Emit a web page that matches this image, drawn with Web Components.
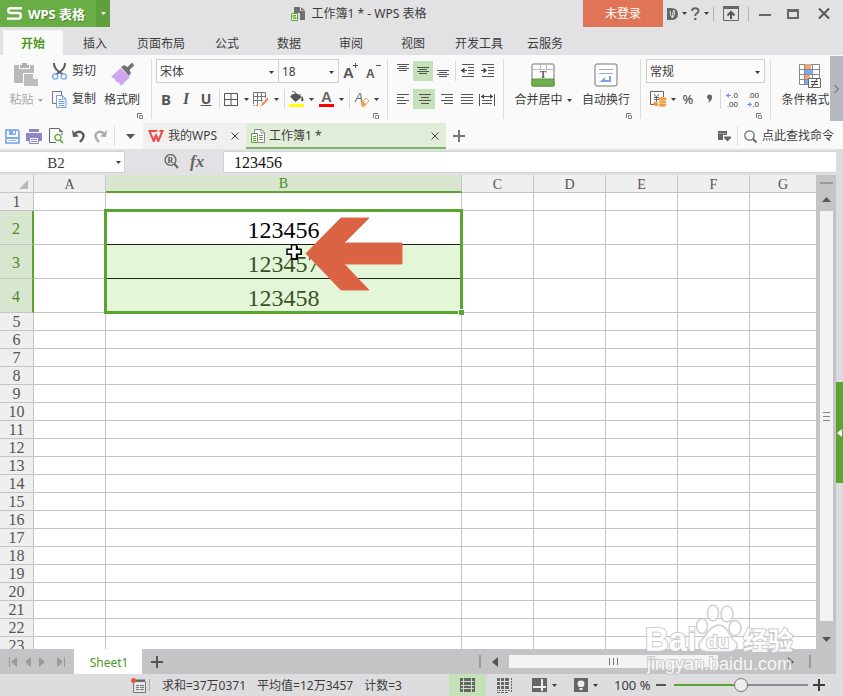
<!DOCTYPE html>
<html lang="zh-CN">
<head>
<meta charset="utf-8">
<title>工作簿1 * - WPS 表格</title>
<style>
  html, body { margin: 0; height: 100%; }
  body { font: 12px/16px "Noto Sans", "Noto Sans CJK SC", sans-serif; color: #3c3c3c; background: #e2e2e4; overflow: hidden; }
</style>
</head>
<body>
<wps-app></wps-app>
<script>
const RESET = `*{box-sizing:border-box} button,select,input{font:inherit;color:inherit;margin:0;padding:0;border:0;background:none;border-radius:0;outline:0} button{display:flex;align-items:center;justify-content:center;white-space:nowrap}`;
function define(tag, css, html, init) {
  const t = document.createElement('template');
  t.innerHTML = `<style>${RESET}${css}</style>${html}`;
  customElements.define(tag, class extends HTMLElement {
    constructor() {
      super();
      this.attachShadow({ mode: 'open' }).appendChild(t.content.cloneNode(true));
    }
    connectedCallback() { if (init) init.call(this, this.shadowRoot); }
  });
}

/* Icon set: [width, height, markup] */
const bars = (rows) => rows.map(([x, y, w]) => `<path d="M${x} ${y + .5}h${w}" stroke="#555" fill="none"/>`).join('');
const ICONS = {
  caret: [5, 3, `<path d="M0 0h5L2.500 3z" fill="currentColor"/>`],
  caretBig: [9, 5, `<path d="M0 0h9L4.500 5z" fill="#555"/>`],
  logo: [15, 13, `<path d="M15 1.200H3.500Q1.200 1.200 1.200 3.400T3.500 6H11.500Q13.800 6 13.800 8.700T11.500 11.600H0" fill="none" stroke="#fff" stroke-width="2.400"/>`],
  book: [14, 14, `<path d="M3 0h6v4h5v9H9V6H3z" fill="#707070"/><path d="M10 0l4 3.500h-4z" fill="#777"/><path d="M.5 6.500h6v7h-6z" fill="#fff" stroke="#58a82e"/><path d="M5 8.500H2v1.500h3v1.500H2" fill="none" stroke="#58a82e"/>`],
  docer: [11, 12, `<path d="M0 0h4q7 0 7 6t-7 6H0z" fill="#666"/><path d="M3 3q0 4 2.500 7Q9 7 7 2 5.500 4 5.500 9" fill="none" stroke="#e2e2e4"/>`],
  help: [9, 13, `<path d="M1 4Q1 1.200 4.200 1.200T7.500 4Q7.500 5.500 5.800 6.300T4.200 9" fill="none" stroke="#666" stroke-width="2"/><path d="M3 11h2.400v2H3z" fill="#666"/>`],
  fold: [16, 15, `<path d="M.5.5h15v14H.5z" fill="none" stroke="#666"/><path d="M0 0h16v3H0z" fill="#666"/><path d="M8 13V6M4.500 9.500L8 6l3.500 3.500" fill="none" stroke="#555" stroke-width="2"/>`],
  min: [12, 9, `<path d="M0 5h12v2H0z" fill="#666"/>`],
  max: [12, 10, `<path d="M1 2h10v7H1z" fill="none" stroke="#666" stroke-width="2"/><path d="M0 0h12v3H0z" fill="#666"/>`],
  close: [12, 11, `<path d="M1 .5l10 10M11 .5l-10 10" stroke="#555" stroke-width="2"/>`],
  launch: [6, 6, `<path d="M.5 5V.5H5" fill="none" stroke="#777"/><path d="M2.500 2.500h3v3h-3z" fill="none" stroke="#888"/>`],
  paste: [25, 24, `<path d="M0 3q0-1 1-1h4v4h11V2h3q1 0 1 1v7H9v10H1q-1 0-1-1z" fill="#b9b9b9"/><path d="M6 5V2h2V0h5v2h2v3z" fill="#b0b0b0"/><path d="M10 11h9l5 5v7H10z" fill="#bdbdbd"/><path d="M19 11v5h5z" fill="#f5f5f5"/>`],
  cut: [15, 17, `<path d="M2 0q0 5 4 8l5 3.500M13 0q0 5-4 8l-5 3.500" fill="none" stroke="#5c5c5c" stroke-width="2"/><circle cx="3.200" cy="13.500" r="2.600" fill="none" stroke="#7fa6e8" stroke-width="1.400"/><circle cx="11.800" cy="13.500" r="2.600" fill="none" stroke="#7fa6e8" stroke-width="1.400"/>`],
  copy: [15, 17, `<path d="M4 12.500H.5V.5h9V4" fill="none" stroke="#777"/><path d="M4.500 4.500h6l3.500 3.500v8.500H4.500z" fill="#fff" stroke="#6f9cec"/><path d="M10.500 4.500V8H14M6.500 8.500h3M6.500 10.500h6M6.500 12.500h6M6.500 14.500h6" fill="none" stroke="#6f9cec"/>`],
  painter: [23, 24, `<path d="M9.500 5l-9.500 9 3.500 1.500L5 19l3 .5 2 3.500 9-9z" fill="#cfa6f2"/><path d="M10 4l3-2 3.500 2L20 .5q1-1 2 0t.8 2.300L18.500 7l1.500 3-2 3z" fill="#737373"/>`],
  grid: [14, 13, `<path d="M.5.5h13v12H.5zM7 .5v12M.5 6.500h13" fill="none" stroke="#555"/>`],
  gridPen: [16, 15, `<path d="M.5 12V.5h12V6M4.500.5v13M8.500.5v9M.5 4.500h12M.5 8.500h9" fill="none" stroke="#777"/><path d="M0 13.500h5" stroke="#ef8a55" stroke-dasharray="2 1"/><path d="M14.500 5.500l-5.500 6-1.500 3 3-1.500 5-5.500z" fill="#ef8a55"/>`],
  fill: [15, 16, `<path d="M5 1l8 5-6.500 5L1 5.500 6.500 2z" fill="#555"/><path d="M3 1q3-2 5 4M2 4h10" fill="none" stroke="#555"/><path d="M13 5q2.500 4 1 5t-2-1z" fill="#555"/><path d="M0 13h15v3H0z" fill="#ff0"/>`],
  fontColor: [15, 16, `<text x="7.500" y="11" text-anchor="middle" font-family="Liberation Sans" font-weight="bold" font-size="15" fill="#666">A</text><path d="M0 13h15v3H0z" fill="#f00"/>`],
  eraser: [15, 15, `<text x="0" y="10" font-family="Liberation Sans" font-size="12" font-style="italic" fill="#666">A</text><path d="M6 11l5-5 3 3-5 5.500H7.500z" fill="#fff" stroke="#f0a050"/><path d="M6 11l2-2 3.500 3.500-2.500 2H7.500z" fill="#f0a050"/>`],
  bigger: [16, 16, `<text x="0" y="15" font-family="Liberation Sans" font-weight="bold" font-size="15" fill="#555">A</text><path d="M10 2.500h5M12.500 0v5" stroke="#555"/>`],
  smaller: [15, 16, `<text x="0" y="15" font-family="Liberation Sans" font-weight="bold" font-size="12" fill="#555">A</text><path d="M10 2.500h5" stroke="#555"/>`],
  vtop: [14, 16, bars([[1,1,12],[3,3,8],[1,5,12],[3,7,8]])],
  vmid: [14, 16, bars([[1,4,12],[3,6,8],[1,8,12],[3,10,8]])],
  vbot: [14, 16, bars([[1,7,12],[3,9,8],[1,11,12],[3,13,8]])],
  outdent: [14, 14, bars([[1,0,12],[7,3,6],[7,6,6],[7,9,6],[1,12,12]]) + `<path d="M0 6.500h6" stroke="#444"/><path d="M3.500 3.500v6L0 6.500z" fill="#444"/>`],
  indent: [14, 14, bars([[1,0,12],[7,3,6],[7,6,6],[7,9,6],[1,12,12]]) + `<path d="M0 6.500h5" stroke="#444"/><path d="M2.500 3.500v6L6 6.500z" fill="#444"/>`],
  left: [13, 12, bars([[0,1,12],[0,4,7],[0,7,12],[0,10,9]])],
  center: [13, 12, bars([[1,1,12],[3,4,8],[1,7,12],[3,10,8]])],
  right: [13, 12, bars([[1,1,12],[5,4,8],[1,7,12],[4,10,9]])],
  justify: [13, 12, bars([[0,1,12],[0,4,12],[0,7,12],[0,10,12]])],
  distrib: [16, 13, bars([[3,7,10],[3,10,10]]) + `<path d="M.5 1v12M15.500 1v12M2 3.500h12" stroke="#555"/><path d="M2 3.500L5 1v5zM14 3.500L11 1v5z" fill="#444"/>`],
  merge: [24, 24, `<rect x="1" y="1" width="22" height="22" rx="1" fill="#fff" stroke="#747474"/><path d="M9.500 1v5M15.500 1v5M1 6.500h22" stroke="#bbb"/><path d="M1 16h22v7H1z" fill="#6fae50" stroke="#579a38"/><text x="12" y="15" text-anchor="middle" font-family="Liberation Serif" font-weight="bold" font-size="10" fill="#555">T</text>`],
  wrap: [24, 24, `<rect x="1" y="1" width="22" height="22" rx="2" fill="#fff" stroke="#747474"/><path d="M5 6.500h14M5 10.500h14" stroke="#aaa"/><path d="M16 13v5H9" fill="none" stroke="#7aa5ee" stroke-width="2"/><path d="M11 14v5H5.500z" fill="#7aa5ee"/>`],
  currency: [17, 17, `<path d="M5 13.500H.5V.5h13V6" fill="none" stroke="#666"/><path d="M4 3l2.500 3L9 3M6.500 6v5M4 6.500h5M4 8.500h5" fill="none" stroke="#666"/><path d="M3 12q2-2 5 0v3H5z" fill="#f0993e"/><ellipse cx="12.500" cy="8" rx="4" ry="2" fill="#f0993e"/><ellipse cx="12.500" cy="11" rx="4" ry="2" fill="#f0993e" stroke="#fff" stroke-width=".5"/><ellipse cx="12.500" cy="14" rx="4" ry="2" fill="#f0993e" stroke="#fff" stroke-width=".5"/>`],
  comma: [7, 16, `<path d="M1 6q0-2.500 2.700-2.500T6 6.500Q6 10 2 11.500q1.500-2 1-3Q1 8 1 6z" fill="#666"/>`],
  decInc: [14, 16, `<path d="M0 4.500h5" stroke="#6f9cec"/><path d="M3 2v5L0 4.500z" fill="#6f9cec"/><text x="12" y="7" text-anchor="end" font-family="Liberation Sans" font-size="8" fill="#333">.0</text><text x="12" y="16" text-anchor="end" font-family="Liberation Sans" font-size="8" fill="#333">.00</text>`],
  decDec: [14, 16, `<path d="M0 13.500h5" stroke="#6f9cec"/><path d="M2 11v5l3-2.500z" fill="#6f9cec"/><text x="12" y="7" text-anchor="end" font-family="Liberation Sans" font-size="8" fill="#333">.00</text><text x="12" y="16" text-anchor="end" font-family="Liberation Sans" font-size="8" fill="#333">.0</text>`],
  cond: [24, 25, `<path d="M1.500 1.500h20v20h-20zM6.500 1v20M14.500 1v20M1 6.500h20M1 11.500h20M1 16.500h20" fill="#fff" stroke="#888"/><path d="M7 1h6v5H7zM7 12h5v4H7z" fill="#f5a56c"/><path d="M7 7h8v4H7zM7 17h3v4H7z" fill="#7ba8f2"/><path d="M10.500 15.500h12v9h-12z" fill="#fff" stroke="#666"/><path d="M13 18.500h7M13 21.500h7M19 16l-5 8" stroke="#444"/>`],
  chev: [5, 8, `<path d="M.5 0l4 4-4 4" fill="none" stroke="#555"/>`],
  save: [15, 15, `<path d="M1 1h11.500L14 2.500V14H1z" fill="#fff" stroke="#6f9fe8" stroke-width="1.600"/><path d="M4 1h7v5H4zM1 8h13v2H1z" fill="#7ba8ee"/><path d="M8 2h2v2.500H8z" fill="#fff"/><path d="M4 11.500h7" stroke="#8fb5f0"/>`],
  print: [16, 15, `<path d="M3 0h10v3H3zM0 4h16v8H0z" fill="#8b88c8"/><path d="M3.500 8.500h9v6h-9z" fill="#fff" stroke="#8b88c8"/><path d="M5 10.500h6M5 12.500h6" stroke="#8b88c8"/>`],
  preview: [15, 16, `<path d="M13 7V3.500L10 .5H.5v14H7" fill="none" stroke="#666"/><path d="M10 0v4h4z" fill="#777"/><circle cx="9" cy="9.500" r="3" fill="#fff" stroke="#6fae50" stroke-width="1.400"/><path d="M11 12l3 3" stroke="#6fae50" stroke-width="2"/>`],
  undo: [13, 13, `<path d="M2 4.500q4-4 7.500-2t1 6.500L8 12" fill="none" stroke="#5c5c5c" stroke-width="2.400"/><path d="M0 0l1 7 6-.5z" fill="#5c5c5c"/>`],
  redo: [13, 13, `<path d="M11 4.500q-4-4-7.500-2t-1 6.500L5 12" fill="none" stroke="#ababab" stroke-width="2.400"/><path d="M13 0l-1 7-6-.5z" fill="#ababab"/>`],
  wlogo: [16, 12, `<path d="M0 0h10l-1.500 2H3l2.500 6L8 3l2.500 5L13 2h-2l1-2h4l-5 12H9.500L8 8l-1.500 4H5z" fill="#ef4a4a"/>`],
  doc: [14, 14, `<path d="M3.500 5V.5h7l3 3v10h-7" fill="#fff" stroke="#8a8a8a"/><path d="M10 .5v3.500h3.500M8 6.500h4M8 8.500h4M8 10.500h4" fill="none" stroke="#8a8a8a"/><path d="M.5 4.500h6v9h-6zM2 7.500h3M2 9.500h3M2 11.500h3" fill="#fff" stroke="#5aa532"/>`],
  x: [8, 8, `<path d="M.5.5l7 7M7.500.5l-7 7" stroke="#444"/>`],
  plus: [12, 12, `<path d="M0 6h12M6 0v12" stroke="currentColor" stroke-width="2"/>`],
  minus: [10, 12, `<path d="M0 6h10" stroke="#555" stroke-width="2"/>`],
  windows: [13, 11, `<path d="M0 0h9v4H5v5H0z" fill="#666"/><path d="M1 2.500h7" stroke="#aaa"/><path d="M6 5.500h7v1.500L9.500 10.500 6 7z" fill="#666"/>`],
  search: [13, 13, `<circle cx="5.500" cy="5.500" r="4.700" fill="none" stroke="#666" stroke-width="1.200"/><path d="M9 9l3.500 3.500" stroke="#666" stroke-width="2"/>`],
  searchR: [15, 16, `<circle cx="6.500" cy="6" r="5.400" fill="none" stroke="#666" stroke-width="1.400"/><text x="6.500" y="9" text-anchor="middle" font-family="Liberation Serif" font-weight="bold" font-size="8" fill="#555">R</text><path d="M10.500 10l3.500 4" stroke="#666" stroke-width="2"/>`],
  up: [9, 5, `<path d="M0 5h9L4.500 0z" fill="#555"/>`],
  tri: [6, 10, `<path d="M6 0v10L0 5z" fill="currentColor"/>`],
  triR: [6, 10, `<path d="M0 0v10l6-5z" fill="currentColor"/>`],
  first: [8, 10, `<path d="M8 0v10L2 5z" fill="currentColor"/><path d="M.5 0v10" stroke="currentColor"/>`],
  last: [8, 10, `<path d="M0 0v10l6-5z" fill="currentColor"/><path d="M7.500 0v10" stroke="currentColor"/>`],
  macro: [15, 15, `<path d="M2.500 3.500h12v11h-12z" fill="#e6e6e6" stroke="#777"/><path d="M3 2.500h11" stroke="#666" stroke-width="2"/><path d="M5 7.500h3M9 7.500h4M5 9.500h3M9 9.500h4M5 11.500h3M9 11.500h4" stroke="#777"/><circle cx="2.500" cy="2.500" r="2.500" fill="#e8583a"/>`],
  vNormal: [15, 14, `<path d="M0 0h15v14H0z" fill="#666"/><path d="M1 3.500h13M1 7.500h13M1 10.500h13M3.500 0v14M11.500 0v14" stroke="#c5e1b9"/>`],
  vPage: [15, 15, `<path d="M0 0h12v11H0z" fill="#666"/><path d="M0 3.500h12M0 7.500h12M3.500 0v11M7.500 0v11" stroke="#ddd"/><path d="M14.500 0v15M13 12.500H0" stroke="#666" stroke-dasharray="2 1"/><path d="M0 14.500h12" stroke="#666" stroke-dasharray="3 1"/>`],
  vSplit: [15, 14, `<path d="M0 0h15v14H0z" fill="#666"/><path d="M10 1v12M1 9h13" stroke="#eee" stroke-width="2"/>`],
  bulb: [14, 14, `<path d="M0 0h14v14H0z" fill="#666"/><path d="M7 2.500q3.500 0 3.500 3.200Q10.500 7.500 9 9H5Q3.500 7.500 3.500 5.700 3.500 2.500 7 2.500zM5.500 10h3v2h-3z" fill="#eee"/>`],
  white: [5, 8, `<path d="M5 0v8L0 4z" fill="#fff"/>`],
};
define('wps-icon', ':host{display:block;flex:none} svg{display:block;overflow:visible}', '<div></div>', function (r) {
  const [w, h, s] = ICONS[this.getAttribute('name')];
  r.querySelector('div').innerHTML = `<svg width="${w}" height="${h}" viewBox="0 0 ${w} ${h}" aria-hidden="true">${s}</svg>`;
});

/* Small toolbar button: --w is the icon cell, --c the drop-down cell */
define('wps-tool', `:host{display:block;flex:none} button{height:20px} .m{width:var(--w,20px);display:flex;justify-content:center} .c{width:var(--c,0);display:flex;justify-content:center;overflow:hidden}
  :host([on]) button{background:#c5e1b9}`,
  '<button type="button"><span class="m"><slot></slot></span><span class="c"><wps-icon name="caret"></wps-icon></span></button>',
  function (r) {
    r.querySelector('button').setAttribute('aria-label', this.getAttribute('label') || '');
    if (!this.hasAttribute('caret')) { const c = r.querySelector('.c'); if (c) c.remove(); }
  });

/* Tall ribbon button: icon above caption */
define('wps-big', `:host{display:block;flex:none} button{flex-direction:column;justify-content:flex-start;width:100%;height:52px;padding-top:4px;gap:5px} .i{height:24px} .t{display:flex;align-items:center;gap:4px;height:16px}`,
  '<button type="button"><span class="i"><slot name="icon"></slot></span><span class="t"><slot></slot></span></button>');

define('wps-combo', `:host{display:flex;position:relative;height:24px;border:1px solid #cfcfd2;background:#fcfcfc;align-items:center} select{appearance:none;width:100%;height:100%;padding:2px 16px 0 3px} wps-icon{position:absolute;right:4px;top:11px;pointer-events:none}`,
  '<select></select><wps-icon name="caret"></wps-icon>', function (r) {
    const s = r.querySelector('select');
    s.setAttribute('aria-label', this.getAttribute('label'));
    s.innerHTML = `<option>${this.getAttribute('value')}</option>`;
  });

define('wps-group', `:host{display:block;flex:none;border-right:1px solid #dcdcde;height:60px} .b{height:52px;display:flex} .l{display:flex;justify-content:flex-end;padding:2px 8px 0 0} :host([plain]) .l{display:none}`,
  '<div class="b"><slot></slot></div><div class="l"><button type="button" aria-label="更多选项"><wps-icon name="launch"></wps-icon></button></div>');

define('wps-titlebar', `:host{display:grid;grid-template-columns:110px 1fr auto;height:27px;background:#e2e2e4}
  .l,.m,.r{display:flex;align-items:center} .r{justify-content:flex-end} .m{gap:7px;justify-content:center;padding-left:24px}
  .brand{width:96px;height:27px;background:#68ad45;color:#fff;font-weight:bold;font-size:13px;gap:6px;padding-right:4px;text-shadow:1px 1px #4d852f} .drop{width:14px;height:27px;background:#5fa03c;color:#fff}
  .login{width:80px;height:27px;background:#e07456;color:#fff;margin-right:4px} .c{gap:4px;width:24px} .s{width:1px;height:14px;background:#b4b4b6}
  .w{height:27px}`,
  `<div class="l"><button class="brand"><wps-icon name="logo"></wps-icon>WPS 表格</button><button class="drop" aria-label="菜单"><wps-icon name="caret"></wps-icon></button></div>
   <div class="m"><wps-icon name="book"></wps-icon><span>工作簿1 * - WPS 表格</span></div>
   <div class="r"><button class="login">未登录</button><button class="c" style="width:20px" aria-label="稻壳"><wps-icon name="docer"></wps-icon><wps-icon name="caret"></wps-icon></button><button class="c" style="width:26px" aria-label="帮助"><wps-icon name="help"></wps-icon><wps-icon name="caret"></wps-icon></button><span class="s"></span><button class="w" style="width:34px" aria-label="折叠功能区"><wps-icon name="fold"></wps-icon></button><span class="s"></span><button class="w" style="width:32px" aria-label="最小化"><wps-icon name="min"></wps-icon></button><button class="w" style="width:24px" aria-label="最大化"><wps-icon name="max"></wps-icon></button><button class="w" style="width:38px" aria-label="关闭"><wps-icon name="close"></wps-icon></button></div>`);

define('wps-menu', `:host{display:flex;height:28px;background:#e2e2e4;padding:3px 2px 0} button{min-width:62px;padding:2px 11px 0;height:25px} .on{background:#fafafa;border:1px solid #f4f4f4;border-bottom:0;color:#4b9a23;font-weight:bold;margin:0 1px;min-width:60px}`,
  ['开始','插入','页面布局','公式','数据','审阅','视图','开发工具','云服务'].map((t, i) => `<button type="button"${i ? '' : ' class="on"'}>${t}</button>`).join(''));

const tool = (label, icon, w, c) => `<wps-tool label="${label}" ${c ? 'caret' : ''} style="--w:${w}px;--c:${c || 0}px"><wps-icon name="${icon}"></wps-icon></wps-tool>`;
const sep = (w) => `<span class="sep" style="width:${w}px"></span>`;
define('wps-ribbon', `:host{display:flex;height:68px;padding:4px 0;background:#fafafa;overflow:hidden}
  .col{display:flex;flex-direction:column;gap:4px} .row{display:flex;align-items:center;height:24px}
  .sep{height:20px;display:flex;justify-content:center;flex:none} .sep::before{content:"";width:1px;background:#d8d8da}
  .txt{width:48px;height:24px;gap:4px;justify-content:flex-start} .txt wps-icon{width:16px}
  .b{font:bold 15px/20px "Noto Sans",sans-serif;color:#555} .i{font:italic bold 16px/20px "Liberation Serif",serif;color:#555} .u{font-size:14px;text-decoration:underline}
  .last{flex:1;min-width:0;overflow:hidden;padding-left:10px} .last wps-big{width:58px} .pct{font-size:13px}
  .more{flex:none;width:13px;height:65px;margin-top:-3px;background:#b6b9c2}`,
  `<wps-group><wps-big style="width:52px;color:#a8a8a8"><wps-icon slot="icon" name="paste"></wps-icon>粘贴<wps-icon name="caret"></wps-icon></wps-big>
     <div class="col"><button class="txt"><wps-icon name="cut"></wps-icon>剪切</button><button class="txt"><wps-icon name="copy"></wps-icon>复制</button></div>
     <wps-big style="width:51px;padding-right:7px"><wps-icon slot="icon" name="painter"></wps-icon>格式刷</wps-big></wps-group>
   <wps-group style="padding-left:4px;width:236px"><div class="col">
     <div class="row"><wps-combo label="字体" value="宋体" style="width:123px"></wps-combo><wps-combo label="字号" value="18" style="width:61px;margin-left:-1px"></wps-combo>${tool('增大字号','bigger',24)}${tool('减小字号','smaller',20)}</div>
     <div class="row"><wps-tool label="加粗"><span class="b">B</span></wps-tool><wps-tool label="倾斜"><span class="i">I</span></wps-tool><wps-tool label="下划线"><span class="b u">U</span></wps-tool>${sep(6)}${tool('边框','grid',18,12)}${tool('绘图边框','gridPen',18,12)}${sep(4)}${tool('填充颜色','fill',20,10)}${tool('字体颜色','fontColor',20,10)}${sep(6)}${tool('清除','eraser',20,8)}</div>
   </div></wps-group>
   <wps-group plain style="padding-left:5px;width:116px"><div class="col">
     <div class="row">${tool('顶端对齐','vtop',20)}${tool('垂直居中','vmid',20).replace('<wps-tool','<wps-tool on')}${tool('底端对齐','vbot',20)}${sep(5)}${tool('减少缩进','outdent',20)}${tool('增加缩进','indent',20)}</div>
     <div class="row">${tool('左对齐','left',20)}${tool('居中','center',22).replace('<wps-tool','<wps-tool on')}${tool('右对齐','right',22)}${tool('两端对齐','justify',20)}${tool('分散对齐','distrib',20)}</div>
   </div></wps-group>
   <wps-group style="padding-left:7px;width:137px"><wps-big style="width:64px"><wps-icon slot="icon" name="merge"></wps-icon>合并居中<wps-icon name="caret"></wps-icon></wps-big><wps-big style="width:62px"><wps-icon slot="icon" name="wrap"></wps-icon>自动换行</wps-big></wps-group>
   <wps-group style="padding-left:5px;width:130px"><div class="col">
     <div class="row"><wps-combo label="数字格式" value="常规" style="width:119px"></wps-combo></div>
     <div class="row">${tool('货币','currency',24,6)}<wps-tool label="百分比" style="--w:24px"><span class="pct">%</span></wps-tool>${tool('千位分隔','comma',18)}${sep(4)}${tool('增加小数位','decInc',22)}${tool('减少小数位','decDec',20)}</div>
   </div></wps-group>
   <div class="last"><wps-big><wps-icon slot="icon" name="cond"></wps-icon>条件格式<wps-icon name="caret"></wps-icon></wps-big></div>
   <button class="more" aria-label="更多"><wps-icon name="chev"></wps-icon></button>`);

define('wps-docbar', `:host{display:flex;align-items:center;height:26px;background:#fafafa}
  .q{width:22px;height:26px} .s{width:1px;height:20px;background:#dcdcde;margin:0 6px 0 3px;flex:none} .more{width:18px;height:26px;margin-right:4px}
  .tab{display:flex;align-items:center;height:26px;background:#f0f0f0;padding:0 7px 0 5px;gap:4px} .tab .n{flex:1;text-align:left;justify-content:flex-start;gap:4px}
  .a{width:103px} .b{width:200px;background:#e2edd9;border-bottom:2px solid #7fb36a;padding-top:2px}
  .p{width:26px;height:26px;color:#777} .r{margin-left:auto;display:flex;align-items:center;padding-right:9px} .r .s{margin:0 6px} .f{gap:5px}`,
  `<div style="width:1px"></div><button class="q" aria-label="保存"><wps-icon name="save"></wps-icon></button><button class="q" aria-label="打印"><wps-icon name="print"></wps-icon></button><button class="q" aria-label="打印预览"><wps-icon name="preview"></wps-icon></button><button class="q" aria-label="撤销"><wps-icon name="undo"></wps-icon></button><button class="q" aria-label="恢复"><wps-icon name="redo"></wps-icon></button><span class="s"></span><button class="more" aria-label="更多"><wps-icon name="caretBig"></wps-icon></button>
   <div class="tab a"><button class="n"><wps-icon name="wlogo"></wps-icon>我的WPS</button><button aria-label="关闭标签"><wps-icon name="x"></wps-icon></button></div>
   <div class="tab b"><button class="n"><wps-icon name="doc"></wps-icon>工作簿1 *</button><button aria-label="关闭标签"><wps-icon name="x"></wps-icon></button></div>
   <button class="p" aria-label="新建"><wps-icon name="plus"></wps-icon></button>
   <div class="r"><button aria-label="窗口"><wps-icon name="windows"></wps-icon></button><span class="s"></span><button class="f"><wps-icon name="search"></wps-icon>点此查找命令</button></div>`);

define('wps-formula', `:host{display:flex;height:26px;padding:2px 0;background:#e2e2e4;font:16px/20px "Liberation Serif",serif}
  .n{display:flex;align-items:center;position:relative;width:125px;background:#fff;border:1px solid #d2d2d6;border-left:0} .n input{width:112px;text-align:center;font-size:15px;padding-top:2px} .n button{width:12px;height:20px}
  .t{display:flex;align-items:center;width:98px;padding-left:39px;gap:11px} .fx{font:italic bold 17px/20px "Liberation Serif",serif;color:#666}
  .v{flex:1;min-width:0;background:#fff;border:1px solid #d2d2d6;border-right:0;padding:2px 0 0 10px;color:#111}`,
  `<div class="n"><input aria-label="名称框" value="B2"><button aria-label="名称"><wps-icon name="caret"></wps-icon></button></div><div class="t"><button aria-label="浏览公式结果"><wps-icon name="searchR"></wps-icon></button><button class="fx" aria-label="插入函数">fx</button></div><input class="v" aria-label="编辑栏" value="123456">`);

const cols = ['A','B','C','D','E','F','G'];
const vals = { 2: '123456', 3: '123457', 4: '123458' };
let rows = '';
for (let r = 1; r <= 23; r++) {
  rows += `<tr class="${vals[r] ? 'tall r' + r : ''}"><th scope="row">${r}</th>` + cols.map(c => c === 'B' && vals[r] ? `<td class="sel">${r === 2 ? '<span class="box"><i></i></span>' : ''}${vals[r]}</td>` : '<td></td>').join('') + '</tr>';
}
define('wps-grid', `:host{display:block;overflow:hidden;background:#fff;position:relative;min-width:0;min-height:0}
  table{table-layout:fixed;border-collapse:separate;border-spacing:0;width:100%;font:16px/16px "Liberation Serif",serif;color:#555}
  th,td{padding:0;border-right:1px solid #c4c4c4;border-bottom:1px solid #c4c4c4;height:18px;font-weight:normal;text-align:center;line-height:16px}
  th{background:#efefef} thead th{font-size:14px;line-height:14px;padding-top:2px} tbody th{padding-top:1px}
  thead th.on{background:#d8e6d0;color:#3f8f1a;border-bottom:2px solid #5aa532} thead th:first-child svg{display:block;margin:0 0 0 auto}
  .tall th,.tall td{height:34px} .tall th{background:#d8e6d0;color:#3f8f1a;border-right:2px solid #5aa532;padding-top:3px}
  td.sel{position:relative;font-size:24px;line-height:24px;padding-top:5px;background:#e3f6d8;color:#3a5227;border-bottom-color:#222} .r2 td.sel{background:#fff;color:#000}
  .box{position:absolute;z-index:1;left:-2px;right:-2px;top:-2px;height:105px;border:3px solid #5aa532} .box i{position:absolute;right:-4px;bottom:-4px;width:5px;height:5px;background:#5aa532;border:solid #fff;border-width:1px 0 0 1px;box-sizing:content-box}
  .arrow{position:absolute;left:305px;top:40px;z-index:2} .cur{position:absolute;left:286px;top:69px;z-index:3}`,
  `<table><colgroup><col style="width:34px"><col style="width:72px"><col style="width:356px"><col style="width:72px"><col style="width:72px"><col style="width:72px"><col style="width:72px"><col></colgroup>
   <thead><tr><th aria-label="全选"><svg width="14" height="10"><path d="M9 0v9H0z" fill="#b8b8b8"/></svg></th>${cols.map(c => `<th scope="col"${c === 'B' ? ' class="on"' : ''}>${c}</th>`).join('')}</tr></thead><tbody>${rows}</tbody></table>
   <svg class="arrow" width="100" height="80" aria-hidden="true"><path d="M1 38.500L36 3h28L39 28h58v21H39l25 26H36z" fill="#d96343" stroke="#e8694a"/></svg>
   <svg class="cur" width="17" height="17" aria-hidden="true"><path d="M7 2h5v4h4v5h-4v5H7v-5H2V6h5z" fill="#000"/><path d="M5.500.7h5v4.500h4.500v5h-4.500v4.500h-5v-4.500H1v-5h4.500z" fill="#fff" stroke="#000" stroke-width="1.400"/></svg>`);

define('wps-vscroll', `:host{display:flex;flex-direction:column;align-items:center;width:19px;background:#c4c4c6;padding:7px 0 1px} .s{width:13px;height:2px;background:#999} button{width:19px;height:27px} .t{flex:1;width:13px;background:#f3f3f3;display:flex;flex-direction:column;align-items:center;justify-content:center;gap:3px} .t i{width:7px;height:1px;background:#888}`,
  `<div class="s"></div><button aria-label="向上滚动" style="padding-top:4px"><wps-icon name="up"></wps-icon></button><div class="t"><i></i><i></i><i></i></div><button aria-label="向下滚动" style="padding-top:10px"><wps-icon name="caretBig"></wps-icon></button>`);

define('wps-sheetbar', `:host{display:flex;align-items:center;height:25px;background:#c4c4c6} .nav{display:flex;width:74px;padding-left:9px;color:#9a9a9a;gap:8px} .tab{width:68px;height:25px;background:#fff;color:#4b9a23;padding:2px 0 0 2px} .p{width:30px;height:25px;color:#555}
  .h{margin-left:auto;display:flex;align-items:center;width:357px;color:#555} .d{width:2px;height:13px;background:#999} .h button{width:28px;height:25px} .trk{flex:1;display:flex} .th{width:209px;height:13px;background:#f3f3f3;display:flex;gap:3px;justify-content:center;align-items:center} .th i{width:1px;height:7px;background:#777}`,
  `<div class="nav"><button aria-label="首个"><wps-icon name="first"></wps-icon></button><button aria-label="上一个"><wps-icon name="tri"></wps-icon></button><button aria-label="下一个"><wps-icon name="triR"></wps-icon></button><button aria-label="末个" style="margin-left:4px"><wps-icon name="last"></wps-icon></button></div>
   <button class="tab">Sheet1</button><button class="p" aria-label="新建工作表"><wps-icon name="plus"></wps-icon></button>
   <div class="h"><span class="d"></span><button aria-label="向左滚动"><wps-icon name="tri"></wps-icon></button><div class="trk"><div class="th"><i></i><i></i><i></i></div></div><button aria-label="向右滚动"><wps-icon name="triR"></wps-icon></button><span class="d" style="margin:0 25px 0 4px"></span></div>`);

define('wps-status', `:host{display:flex;align-items:center;height:22px;background:#dddde0;padding:0 18px 0 131px} .s{width:1px;height:12px;background:#aaa;margin:0 12px 0 3px} .v{display:flex;gap:11px;white-space:nowrap;padding-top:2px}
  .r{margin-left:auto;display:flex;align-items:center} .r button{height:22px;width:37px} .on{background:#c5e1b9} .r .c{gap:5px;width:42px} .z{width:36px;font-size:13px;margin:0 5px 0 7px;white-space:nowrap} .r .k{width:12px}
  input{appearance:none;width:134px;height:16px;margin:0 5px 0 7px} input::-webkit-slider-runnable-track{height:2px;background:linear-gradient(90deg,#5aa532 50%,#8a8a94 50%)} input::-webkit-slider-thumb{appearance:none;width:14px;height:14px;margin-top:-6px;border-radius:50%;background:#eee;border:1px solid #777}`,
  `<button aria-label="宏"><wps-icon name="macro"></wps-icon></button><span class="s"></span><div class="v"><span>求和=37万0371</span><span>平均值=12万3457</span><span>计数=3</span></div>
   <div class="r"><button class="on" aria-label="普通视图"><wps-icon name="vNormal"></wps-icon></button><button aria-label="分页预览"><wps-icon name="vPage"></wps-icon></button><button class="c" aria-label="阅读模式"><wps-icon name="vSplit"></wps-icon><wps-icon name="caret"></wps-icon></button><button class="c" aria-label="护眼模式"><wps-icon name="bulb"></wps-icon><wps-icon name="caret"></wps-icon></button><span class="z">100 %</span><button class="k" aria-label="缩小"><wps-icon name="minus"></wps-icon></button><input type="range" min="0" max="100" value="50" aria-label="缩放"><button class="k" aria-label="放大"><wps-icon name="plus"></wps-icon></button></div>`);

define('wps-watermark', `:host{position:absolute;right:38px;bottom:18px;z-index:5;pointer-events:none} svg{display:block;overflow:visible} text{font-family:"Liberation Sans","Noto Sans CJK SC",sans-serif;font-weight:bold;fill:#fff;stroke:#c2c2c4;stroke-width:2px;paint-order:stroke}`,
  `<svg width="160" height="74" opacity=".85"><text x="0" y="47" font-size="33">Bai</text><g fill="#fff" stroke="#c8c8ca" stroke-width="1.500"><ellipse cx="57" cy="22" rx="5.500" ry="7.500"/><ellipse cx="68" cy="9" rx="5.500" ry="8"/><ellipse cx="82" cy="10" rx="6" ry="8"/><ellipse cx="90" cy="24" rx="6" ry="7.500"/><path d="M73 21q7 0 11 8t8 10q1 8-6 9H61q-8-1-7-9 4-4 8-10t11-8z"/></g><text x="61" y="44" font-size="19">du</text><text x="98" y="46" font-size="25">经验</text><text x="2" y="66" font-size="18" style="font-weight:normal">jingyan.baidu.com</text></svg>`);

define('wps-app', `:host{display:flex;flex-direction:column;height:100vh;position:relative} .mid{flex:1;min-height:0;display:grid;grid-template-columns:minmax(0,1fr) 7px} .main{display:flex;flex-direction:column;min-height:0} .sheet{flex:1;min-height:0;display:grid;grid-template-columns:minmax(0,1fr) 19px;grid-template-rows:minmax(0,1fr)}
  .side{background:#dcdce0;display:flex;flex-direction:column;justify-content:center} .side button{height:101px;margin-top:42px;background:#5aa532}`,
  `<wps-titlebar></wps-titlebar><wps-menu></wps-menu><wps-ribbon></wps-ribbon><wps-docbar></wps-docbar>
   <div class="mid"><div class="main"><wps-formula></wps-formula><div class="sheet"><wps-grid></wps-grid><wps-vscroll></wps-vscroll></div><wps-sheetbar></wps-sheetbar></div><div class="side"><button aria-label="展开任务窗格"><wps-icon name="white"></wps-icon></button></div></div>
   <wps-status></wps-status><wps-watermark></wps-watermark>`);
</script>
</body>
</html>
